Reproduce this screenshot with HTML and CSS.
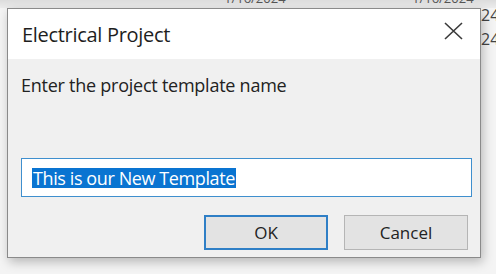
FILE: index.html
```html
<!DOCTYPE html>
<html>
<head>
<meta charset="utf-8">
<link rel="stylesheet" href="styles.css">
</head>
<body>
<div class="backdrop">
  <span class="bg-date d1">1/16/2024</span>
  <span class="bg-date d2">1/16/2024</span>
  <span class="bg-num n1">24</span>
  <span class="bg-num n2">24</span>
</div>
<div class="dialog">
  <div class="titlebar">
    <span class="title">Electrical Project</span>
    <svg class="close" width="21" height="18" viewBox="0 0 21 18"><path d="M2 1 L19 17 M19 1 L2 17" stroke="#3a3a3a" stroke-width="1.6" fill="none"/></svg>
  </div>
  <div class="body">
    <div class="prompt">Enter the project template name</div>
    <div class="input"><span class="sel">This is our New Template</span></div>
    <div class="buttons">
      <div class="btn default">OK</div>
      <div class="btn">Cancel</div>
    </div>
  </div>
</div>
</body>
</html>
```
FILE: styles.css
```css
html, body { margin: 0; padding: 0; }
body {
  width: 496px; height: 274px; overflow: hidden;
  background: linear-gradient(#dcdcdc 0, #ececec 8px, #f4f4f4 8px, #f4f4f4 100%);
  font-family: "Open Sans", "Noto Sans", sans-serif;
  position: relative;
}
.backdrop { position: absolute; inset: 0; }
.bg-date { position: absolute; font-size: 13px; color: #555; top: -11px; }
.d1 { left: 224px; }
.d2 { left: 412px; }
.bg-num { position: absolute; left: 481px; font-size: 16px; color: #444; }
.n1 { top: 4px; }
.n2 { top: 28px; }
.dialog {
  position: relative;
  margin: 8px 0 0 7px;
  width: 472px; height: 248px;
  border: 1px solid #8a8a8a;
  background: #f0f0f0;
  box-shadow: 2px 4px 10px rgba(0,0,0,0.25);
  display: flex; flex-direction: column;
}
.titlebar {
  height: 50px; background: #fff;
  display: flex; align-items: center; justify-content: space-between;
  padding: 0 16px 0 14px;
}
.title { font-size: 20px; color: #1e1e1e; letter-spacing: -0.3px; }
.close { margin-top: -6px; }
.body { flex: 1; display: flex; flex-direction: column; padding: 0 7px 0 13px; }
.prompt { font-size: 18px; line-height: 25px; color: #222; margin-top: 14px; letter-spacing: -0.25px; }
.input {
  margin-top: 60px; height: 39px; width: 451px;
  border: 1px solid #3f8fce; background: #fff;
  display: flex; align-items: center; padding-left: 10px; box-sizing: border-box;
}
.sel { background: #0a74d1; color: #fff; font-size: 18px; line-height: 20px; padding: 0 1px; letter-spacing: -0.4px; }
.buttons { display: flex; justify-content: flex-end; gap: 16px; margin-top: 18px; padding-right: 5px; }
.btn {
  width: 124px; height: 35px; box-sizing: border-box;
  border: 1px solid #b5b5b5; background: #e3e3e3;
  display: flex; align-items: center; justify-content: center;
  font-size: 17px; color: #222;
}
.btn.default { border: 2px solid #2f7fc6; }
```
